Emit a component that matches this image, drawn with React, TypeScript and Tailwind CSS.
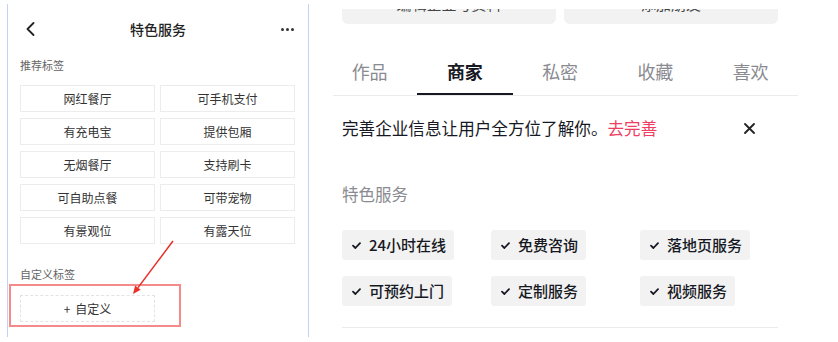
const tags = ['网红餐厅', '可手机支付', '有充电宝', '提供包厢', '无烟餐厅', '支持刷卡', '可自助点餐', '可带宠物', '有景观位', '有露天位'];
const tabs = ['作品', '商家', '私密', '收藏', '喜欢'];
const services = ['24小时在线', '免费咨询', '落地页服务', '可预约上门', '定制服务', '视频服务'];

function Check() {
  return (
    <svg width="9" height="7" viewBox="0 0 9 7" fill="none" className="shrink-0">
      <path d="M1 3.6 L3.4 6 L8 1.2" stroke="#161823" strokeWidth="1.8" strokeLinecap="round" strokeLinejoin="round" />
    </svg>
  );
}

function TagPanel() {
  return (
    <div className="ml-[7px] mt-[4px] w-[302px] h-[333px] shrink-0 border-x border-[#c3d3f8] flex flex-col">
      <div className="h-[50px] flex items-center">
        <div className="w-[44px] pl-[18px] flex items-center">
          <svg width="9" height="14" viewBox="0 0 9 14" fill="none">
            <path d="M7.5 1 L1.5 7 L7.5 13" stroke="#222" strokeWidth="1.8" strokeLinecap="round" strokeLinejoin="round" />
          </svg>
        </div>
        <div className="flex-1 text-center text-[14px] font-medium text-[#222]">特色服务</div>
        <div className="w-[44px] pr-[14px] flex justify-end gap-[2px]">
          <span className="w-[3px] h-[3px] rounded-full bg-[#333]" />
          <span className="w-[3px] h-[3px] rounded-full bg-[#333]" />
          <span className="w-[3px] h-[3px] rounded-full bg-[#333]" />
        </div>
      </div>
      <div className="mt-[3px] pl-[12px] text-[11px] leading-[16px] text-[#666]">推荐标签</div>
      <div className="mt-[12px] pl-[12px] grid grid-cols-[135px_135px] gap-x-[5px] gap-y-[6px]">
        {tags.map((t) => (
          <div key={t} className="h-[27px] border border-[#ececec] flex items-center justify-center text-[12px] text-[#333]">
            {t}
          </div>
        ))}
      </div>
      <div className="mt-[22px] pl-[12px] text-[11px] leading-[16px] text-[#666]">自定义标签</div>
      <div className="mt-[2px] ml-[1px] w-[172px] h-[43px] border-2 border-[#f48a8a] pl-[9px] pt-[9px]">
        <div className="w-[135px] h-[27px] border border-dashed border-[#e3e3e3] flex items-center justify-center gap-[5px] text-[12px] text-[#333]">
          <span>+</span>
          <span>自定义</span>
        </div>
      </div>
    </div>
  );
}

function MerchantPage() {
  return (
    <div className="flex-1 flex flex-col">
      {/* cards of the profile header, scrolled mostly out of view */}
      <div className="mt-[9px] h-[15px] overflow-hidden">
        <div className="ml-[33px] -mt-[25px] flex gap-[8px]">
          <div className="w-[214px] h-[40px] rounded-[6px] bg-[#f2f2f2] pt-[11px] text-center text-[15px] leading-[18px] text-[#444]">编辑企业号资料</div>
          <div className="w-[214px] h-[40px] rounded-[6px] bg-[#f2f2f2] pt-[11px] text-center text-[15px] leading-[18px] text-[#444]">添加朋友</div>
        </div>
      </div>
      <div className="mt-[35px] ml-[13px] flex">
        {tabs.map((t, i) => (
          <div key={t} className="w-[95.25px] flex flex-col items-center">
            <div className={i === 1 ? 'h-[24px] leading-[24px] text-[18px] font-semibold text-[#161823]' : 'h-[24px] leading-[24px] text-[18px] text-[#8a8b91]'}>
              {t}
            </div>
            <div className={i === 1 ? 'mt-[10px] w-full h-[2px] bg-[#161823]' : 'mt-[10px] w-full h-[2px]'} />
          </div>
        ))}
      </div>
      <div className="ml-[24px] w-[465px] h-px bg-[#ebebeb]" />
      <div className="mt-[20px] ml-[33px] w-[413px] h-[24px] flex items-center">
        <span className="text-[16.6px] text-[#161823]">
          完善企业信息让用户全方位了解你。<span className="text-[#f03e62]">去完善</span>
        </span>
        <svg className="ml-auto" width="11" height="11" viewBox="0 0 11 11" fill="none">
          <path d="M1 1 L10 10 M10 1 L1 10" stroke="#222" strokeWidth="1.8" strokeLinecap="round" />
        </svg>
      </div>
      <div className="mt-[42px] ml-[33px] h-[24px] leading-[24px] text-[16.5px] text-[#8a8b91]">特色服务</div>
      <div className="mt-[24px] ml-[33px] grid grid-cols-[149px_149px_149px] gap-y-[16px] justify-items-start">
        {services.map((s) => (
          <div key={s} className="h-[30px] pl-[10px] pr-[8px] rounded-[3px] bg-[#f2f2f2] flex items-center gap-[8px] text-[15px] font-medium text-[#161823]">
            <Check />
            {s}
          </div>
        ))}
      </div>
      <div className="mt-[21px] ml-[33px] w-[436px] h-px bg-[#ebebeb]" />
    </div>
  );
}

export default function App() {
  return (
    <div
      className="relative w-[838px] h-[342px] bg-white flex overflow-hidden"
      style={{ fontFamily: '"Noto Sans CJK SC", "Noto Sans", sans-serif' }}
    >
      <TagPanel />
      <MerchantPage />
      <svg className="absolute left-0 top-0 pointer-events-none" width="838" height="342">
        <line x1="173" y1="241" x2="138" y2="287.6" stroke="#e8302a" strokeWidth="1.5" />
        <polygon points="133,294 140.7,289.7 135.1,285.5" fill="#e8302a" />
      </svg>
    </div>
  );
}
